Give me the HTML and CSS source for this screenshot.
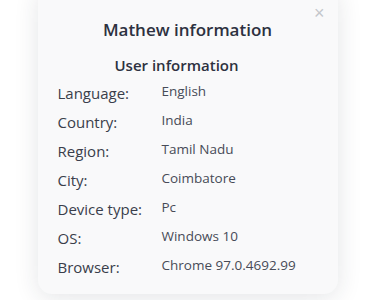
FILE: index.html
```html
<!DOCTYPE html>
<html lang="en">
<head>
    <meta charset="UTF-8">
    <meta name="viewport" content="width=device-width, initial-scale=1.0">
    <title>Mathew information</title>
    <link rel="stylesheet" href="styles.css">
</head>
<body>
    <div class="modal">
        <button class="close" aria-label="Close">&times;</button>
        <h2 class="title">Mathew information</h2>
        <h3 class="subtitle">User information</h3>
        <div class="info">
            <div class="row"><span class="label">Language:</span><span class="value">English</span></div>
            <div class="row"><span class="label">Country:</span><span class="value">India</span></div>
            <div class="row"><span class="label">Region:</span><span class="value">Tamil Nadu</span></div>
            <div class="row"><span class="label">City:</span><span class="value">Coimbatore</span></div>
            <div class="row"><span class="label">Device type:</span><span class="value">Pc</span></div>
            <div class="row"><span class="label">OS:</span><span class="value">Windows 10</span></div>
            <div class="row"><span class="label">Browser:</span><span class="value">Chrome 97.0.4692.99</span></div>
        </div>
    </div>
</body>
</html>
```

FILE: styles.css
```css
body {
    margin: 0;
    background: #ffffff;
    font-family: "Open Sans", "Noto Sans", sans-serif;
    height: 300px;
    overflow: hidden;
}
.modal {
    position: relative;
    width: 300px;
    margin: -14px auto 0;
    padding: 31px 20px 9px;
    box-sizing: border-box;
    background: #f9f9fa;
    border-radius: 14px;
    box-shadow: 0 4px 24px rgba(30, 40, 60, 0.12);
}
.close {
    position: absolute;
    top: 18px;
    right: 13px;
    border: none;
    background: none;
    padding: 0;
    font-size: 18px;
    line-height: 18px;
    color: #c4c6cb;
    font-family: Arial, sans-serif;
    cursor: pointer;
}
.title {
    margin: 0;
    text-align: center;
    font-size: 17px;
    font-weight: 600;
    color: #2d3140;
    line-height: 26px;
}
.subtitle {
    margin: 11px 0 6px;
    padding-right: 22px;
    text-align: center;
    font-size: 15px;
    font-weight: 600;
    color: #2d3140;
    line-height: 22px;
}
.row {
    display: flex;
    align-items: flex-start;
    height: 29px;
}
.label {
    width: 104px;
    font-size: 15px;
    line-height: 22px;
    color: #3a3e4b;
}
.value {
    font-size: 13.5px;
    line-height: 18px;
    color: #474b57;
}
```
